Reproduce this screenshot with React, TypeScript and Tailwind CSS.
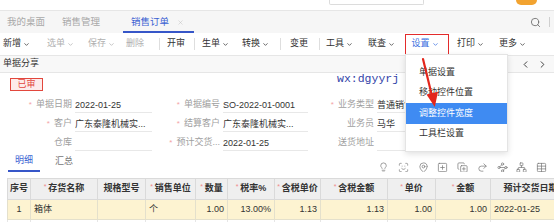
import {
  ChevronDown,
  ChevronLeft,
  ChevronRight,
  Search,
  X,
  Lightbulb,
  ScanFace,
  MapPin,
  SquarePlus,
  CopyPlus,
  Redo2,
  Waypoints,
  Network,
  Table,
  LayoutGrid,
} from "lucide-react";

type ToolItem =
  | { kind: "btn"; label: string; caret?: boolean; disabled?: boolean; w: string }
  | { kind: "sep"; m: string };

// widths tuned so every button starts where the screenshot has it
const tools: ToolItem[] = [
  { kind: "btn", label: "新增", caret: true, w: "w-[44px]" },
  { kind: "btn", label: "选单", caret: true, disabled: true, w: "w-[41px]" },
  { kind: "btn", label: "保存", caret: true, disabled: true, w: "w-[38px]" },
  { kind: "btn", label: "删除", disabled: true, w: "w-[33px]" },
  { kind: "sep", m: "mr-[7px]" },
  { kind: "btn", label: "开审", w: "w-[27px]" },
  { kind: "sep", m: "mr-[7px]" },
  { kind: "btn", label: "生单", caret: true, w: "w-[40px]" },
  { kind: "btn", label: "转换", caret: true, w: "w-[38px]" },
  { kind: "sep", m: "mr-[9px]" },
  { kind: "btn", label: "变更", w: "w-[29px]" },
  { kind: "sep", m: "mr-[6px]" },
  { kind: "btn", label: "工具", caret: true, w: "w-[42px]" },
  { kind: "btn", label: "联查", caret: true, w: "w-[37px]" },
];

function Field({
  label,
  req,
  value,
  lw,
  vw,
}: {
  label: string;
  req?: boolean;
  value: string;
  lw: string;
  vw: string;
}) {
  return (
    <div className="flex items-center shrink-0">
      <div className={`${lw} flex items-center justify-end whitespace-nowrap text-[#a0a0a0]`}>
        {req && <span className="mr-[4px] text-[8px] text-[#f3a3a3]">*</span>}
        {label}
      </div>
      <div className={`${vw} ml-[3px] h-[16px] truncate border-b border-[#e8e8e8] leading-[16px] text-[#333]`}>
        {value}
      </div>
    </div>
  );
}

const cols = [
  { w: "w-[23px]", title: "序号", req: false },
  { w: "w-[67px]", title: "存货名称", req: true },
  { w: "w-[48px]", title: "规格型号", req: false },
  { w: "w-[50px]", title: "销售单位", req: true },
  { w: "w-[32px]", title: "数量", req: true },
  { w: "w-[47px]", title: "税率%", req: true },
  { w: "w-[46px]", title: "含税单价", req: true },
  { w: "w-[67px]", title: "含税金额", req: true },
  { w: "w-[48px]", title: "单价", req: true },
  { w: "w-[55px]", title: "金额", req: true },
  { w: "w-[80px]", title: "预计交货日期", req: false },
];

const row = [
  { v: "1", a: "text-center" },
  { v: "箱体", a: "text-left" },
  { v: "", a: "text-left" },
  { v: "个", a: "text-left" },
  { v: "1.00", a: "text-right" },
  { v: "13.00%", a: "text-right" },
  { v: "1.13", a: "text-right" },
  { v: "1.13", a: "text-right" },
  { v: "1.00", a: "text-right" },
  { v: "1.00", a: "text-right" },
  { v: "2022-01-25", a: "text-left" },
];

const icons = [Lightbulb, ScanFace, MapPin, SquarePlus, CopyPlus, Redo2, Waypoints, Network, Table, LayoutGrid];

export default function App() {
  return (
    <div className="relative h-[222px] w-[554px] overflow-hidden bg-white text-[9px] text-[#333] font-['Liberation_Sans','Noto_Sans_CJK_SC',sans-serif]">
      {/* top strip, mostly cut off */}
      <div className="flex h-[11px] items-start border-b border-[#e6e6e6]">
        <div className="ml-[329px] h-[5px] w-[95px] rounded-b-[2px] border border-t-0 border-[#dcdcdc]" />
        <div className="ml-[92px] h-[5px] w-[21px] rounded-b-full bg-[#f2a330]" />
      </div>

      {/* page tabs */}
      <div className="flex h-[22px] items-center bg-[#f6f6f6] pl-[7px] text-[9.5px]">
        <span className="text-[#a8a8a8]">我的桌面</span>
        <span className="ml-[17px] text-[#a8a8a8]">销售管理</span>
        <div className="ml-[23px] flex h-full items-center border-b-2 border-[#3656c8] pl-[8px] pr-[10px] pt-[2px]">
          <span className="text-[#3a5fd2]">销售订单</span>
          <X size={7} strokeWidth={1.5} className="ml-[8px] text-[#bbb]" />
        </div>
        <Search size={11} strokeWidth={1.8} className="ml-auto mr-[8px] text-[#666]" />
        <div className="mr-[4px] h-[10px] w-px bg-[#cfcfcf]" />
      </div>

      {/* toolbar */}
      <div className="flex h-[23px] items-center border-b border-[#e6e6e6] pl-[3px]">
        {tools.map((t, i) =>
          t.kind === "sep" ? (
            <div key={i} className={`h-[12px] w-px bg-[#dedede] ${t.m}`} />
          ) : (
            <div
              key={i}
              className={`flex shrink-0 items-center ${t.w} ${t.disabled ? "text-[#b0b0b0]" : "text-[#333]"}`}
            >
              {t.label}
              {t.caret && <ChevronDown size={7} strokeWidth={2.5} className="ml-[2px]" />}
            </div>
          )
        )}
        <div className="flex h-[21px] w-[44px] shrink-0 items-center border-[1.5px] border-[#e32b2b] pl-[5.5px] text-[#3a6fe0]">
          设置
          <ChevronDown size={7} strokeWidth={2.5} className="ml-[2px]" />
        </div>
        <div className="ml-[8px] flex w-[42px] shrink-0 items-center">
          打印
          <ChevronDown size={7} strokeWidth={2.5} className="ml-[2px]" />
        </div>
        <div className="flex w-[40px] shrink-0 items-center">
          更多
          <ChevronDown size={7} strokeWidth={2.5} className="ml-[2px]" />
        </div>
      </div>

      {/* share bar */}
      <div className="flex h-[17px] items-center justify-between border-b border-[#e6e6e6] bg-[#f8f8f8] pl-[3px] pr-[6px]">
        <span>单据分享</span>
        <div className="flex items-center gap-[6px] text-[#333]">
          <ChevronLeft size={11} strokeWidth={2} />
          <ChevronRight size={11} strokeWidth={2} />
        </div>
      </div>

      {/* header form */}
      <div className="ml-[10px] mt-[5px] flex h-[13px] w-[33px] items-center justify-center border border-[#e2473d] bg-[#fdeceb] text-[#e2473d]">
        已审
      </div>
      <div className="mt-[4px] flex flex-col">
        <div className="flex h-[19px] items-center">
          <Field lw="w-[72px]" vw="w-[77px]" label="单据日期" req value="2022-01-25" />
          <Field lw="w-[68px]" vw="w-[85px]" label="单据编号" req value="SO-2022-01-0001" />
          <Field lw="w-[66px]" vw="w-[90px]" label="业务类型" req value="普通销售" />
        </div>
        <div className="flex h-[19px] items-center">
          <Field lw="w-[72px]" vw="w-[77px]" label="客户" req value="广东泰隆机械实..." />
          <Field lw="w-[68px]" vw="w-[85px]" label="结算客户" req value="广东泰隆机械实..." />
          <Field lw="w-[66px]" vw="w-[90px]" label="业务员" value="马华" />
        </div>
        <div className="flex h-[19px] items-center">
          <Field lw="w-[72px]" vw="w-[77px]" label="仓库" value="" />
          <Field lw="w-[68px]" vw="w-[85px]" label="预计交货..." req value="2022-01-25" />
          <Field lw="w-[66px]" vw="w-[90px]" label="送货地址" value="" />
        </div>
      </div>

      {/* detail tabs + icon tools */}
      <div className="flex h-[20px] overflow-hidden">
        <div className="flex w-[80px] shrink-0 items-stretch pl-[8px]">
          <div className="flex items-center border-b-2 border-[#3656c8] px-[7px] text-[#3a5fd2]">明细</div>
          <div className="ml-[8px] flex items-center px-[7px] text-[#777]">汇总</div>
        </div>
        <div className="ml-[298px] mt-[9.5px] flex shrink-0 gap-[8.75px] self-start text-[#7a7a7a]">
          {icons.map((Icon, i) => (
            <Icon key={i} size={11} strokeWidth={1.6} />
          ))}
        </div>
      </div>

      {/* detail table */}
      <div className="mt-[6px] pl-[7px]">
        <table className="w-[563px] table-fixed border-collapse">
          <colgroup>
            {cols.map((c, i) => (
              <col key={i} className={c.w} />
            ))}
          </colgroup>
          <thead>
            <tr className="h-[21px] bg-[#efefef]">
              {cols.map((c, i) => (
                <th
                  key={i}
                  className="overflow-hidden whitespace-nowrap border border-[#dadada] px-[2px] text-center font-semibold text-[#333]"
                >
                  {c.req && <span className="mr-[2px] align-top text-[7px] font-normal text-[#f08a8a]">*</span>}
                  {c.title}
                </th>
              ))}
            </tr>
          </thead>
          <tbody>
            <tr className="h-[20px] bg-[#fdf3d1]">
              {row.map((c, i) => (
                <td
                  key={i}
                  className={`overflow-hidden whitespace-nowrap border border-[#e4e0cc] px-[3px] ${c.a}`}
                >
                  {c.v}
                </td>
              ))}
            </tr>
            <tr className="h-[20px]">
              {row.map((_, i) => (
                <td key={i} className="border border-[#e6e6e6]" />
              ))}
            </tr>
          </tbody>
        </table>
      </div>

      {/* watermark text */}
      <div className="absolute left-[337px] top-[73px] text-[11.5px] leading-[12px] text-[#3343a8] font-['Liberation_Mono',monospace]">
        wx:dgyyrj
      </div>

      {/* settings dropdown */}
      <div className="absolute left-[405px] top-[54px] w-[103px] border border-[#e4e4e4] bg-white py-[7px] shadow-[0_2px_6px_rgba(0,0,0,0.12)]">
        <div className="flex h-[20.5px] items-center pl-[13px]">单据设置</div>
        <div className="flex h-[20.5px] items-center pl-[13px]">移动控件位置</div>
        <div className="flex h-[20.5px] items-center bg-[#3f8bf2] pl-[13px] text-white">调整控件宽度</div>
        <div className="flex h-[20.5px] items-center pl-[13px]">工具栏设置</div>
      </div>

      {/* red annotation arrow */}
      <svg className="absolute left-[415px] top-[56px]" width="30" height="56" viewBox="0 0 30 56">
        <line x1="8" y1="3" x2="17" y2="40" stroke="#e3261c" strokeWidth="2.2" strokeLinecap="round" />
        <polygon points="11.5,38.5 23,35.8 19.8,51" fill="#e3261c" />
      </svg>
    </div>
  );
}
